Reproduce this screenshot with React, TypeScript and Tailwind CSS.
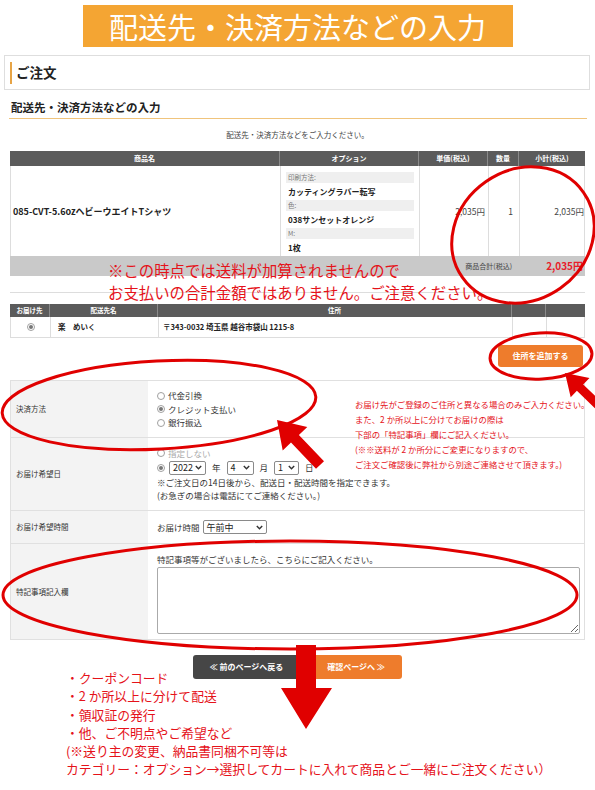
import React from "react";

const RED = "#e5121a";

function arrowPoints(sx: number, sy: number, tx: number, ty: number, sw: number, hw: number, hl: number) {
  const dx = tx - sx, dy = ty - sy;
  const L = Math.hypot(dx, dy);
  const ux = dx / L, uy = dy / L;
  const px = -uy, py = ux;
  const bx = tx - ux * hl, by = ty - uy * hl;
  const p = [
    [sx + (px * sw) / 2, sy + (py * sw) / 2],
    [bx + (px * sw) / 2, by + (py * sw) / 2],
    [bx + (px * hw) / 2, by + (py * hw) / 2],
    [tx, ty],
    [bx - (px * hw) / 2, by - (py * hw) / 2],
    [bx - (px * sw) / 2, by - (py * sw) / 2],
    [sx - (px * sw) / 2, sy - (py * sw) / 2],
  ];
  return p.map((q) => q.map((v) => v.toFixed(1)).join(",")).join(" ");
}

function Radio({ checked }: { checked?: boolean }) {
  return (
    <span className="inline-flex w-[8px] h-[8px] rounded-full border border-[#a0a0a0] bg-white items-center justify-center shrink-0">
      {checked && <span className="w-[4px] h-[4px] rounded-full bg-[#777]" />}
    </span>
  );
}

function Chevron() {
  return (
    <svg width="7" height="5" viewBox="0 0 7 5" className="shrink-0">
      <path d="M0.8 0.9 L3.5 3.7 L6.2 0.9" fill="none" stroke="#333" strokeWidth="1.4" />
    </svg>
  );
}

function Select({ value, w }: { value: string; w: string }) {
  return (
    <span className={`inline-flex items-center justify-between h-[14px] ${w} border border-[#8a8a8a] rounded-[2px] pl-[3px] pr-[3px] text-[9px] text-[#222] bg-white`}>
      <span>{value}</span>
      <Chevron />
    </span>
  );
}

export default function App() {
  return (
    <div className="relative w-[595px] h-[790px] overflow-hidden bg-white text-[#333] font-['Noto_Sans_CJK_JP',sans-serif]">
      {/* banner */}
      <div className="pt-[5px] flex justify-center">
        <div className="w-[430px] h-[42px] bg-[#f4a533] flex items-center justify-center text-white text-[29px] leading-none">
          配送先・決済方法などの入力
        </div>
      </div>

      {/* ご注文 */}
      <div className="mt-[8px] ml-[4px] mr-[5px] h-[35px] border border-[#dedede] flex items-center pl-[5px]">
        <div className="w-[2px] h-[22px] bg-[#e7a446]" />
        <span className="ml-[4px] text-[13.5px] font-bold text-[#222] leading-none">ご注文</span>
      </div>

      {/* heading */}
      <div className="mt-[8px] ml-[9px] mr-[8px] h-[21px] border-b-[1.5px] border-[#f0c47c] flex items-center pl-[2px] text-[11.5px] font-bold text-[#222] leading-none">
        配送先・決済方法などの入力
      </div>

      <div className="mt-[9px] h-[14px] flex items-center justify-center text-[7.5px] text-[#444] leading-none">
        配送先・決済方法などをご入力ください。
      </div>

      {/* product table */}
      <div className="mt-[9px] mx-[10px]">
        <div className="grid grid-cols-[269px_139px_69px_31px_67px] h-[15px] bg-[#5b5b5b] text-white text-[7px] font-bold leading-none">
          <div className="flex items-center justify-center">商品名</div>
          <div className="flex items-center justify-center border-l border-[#8a8a8a]">オプション</div>
          <div className="flex items-center justify-center border-l border-[#8a8a8a]">単価(税込)</div>
          <div className="flex items-center justify-center border-l border-[#8a8a8a]">数量</div>
          <div className="flex items-center justify-center border-l border-[#8a8a8a]">小計(税込)</div>
        </div>
        <div className="grid grid-cols-[269px_139px_69px_31px_67px] h-[90px] border-l border-r border-[#dddddd] text-[8.5px] text-[#444] leading-none">
          <div className="flex items-center pl-[2px] text-[9px] font-bold text-[#222]">085-CVT-5.6ozヘビーウエイトTシャツ</div>
          <div className="border-l border-[#dddddd] pt-[6px] px-[5px] flex flex-col">
            <div className="h-[11px] bg-[#efefef] flex items-center pl-[2px] text-[6.5px] text-[#777]">印刷方法:</div>
            <div className="h-[17px] flex items-center pl-[2px] text-[8px] font-bold text-[#222]">カッティングラバー転写</div>
            <div className="h-[11px] bg-[#efefef] flex items-center pl-[2px] text-[6.5px] text-[#777]">色:</div>
            <div className="h-[17px] flex items-center pl-[2px] text-[8px] font-bold text-[#222]">038サンセットオレンジ</div>
            <div className="h-[11px] bg-[#efefef] flex items-center pl-[2px] text-[6.5px] text-[#777]">M:</div>
            <div className="h-[17px] flex items-center pl-[2px] text-[8px] font-bold text-[#222]">1枚</div>
          </div>
          <div className="border-l border-[#dddddd] flex items-center justify-end pr-[3px]">2,035円</div>
          <div className="border-l border-[#dddddd] flex items-center justify-end pr-[6px]">1</div>
          <div className="border-l border-[#dddddd] flex items-center justify-end pr-[2px]">2,035円</div>
        </div>
        <div className="h-[20px] bg-[#c9c9c9] flex items-center justify-end leading-none">
          <span className="text-[7px] text-[#444] pr-[6px]">商品合計(税込)</span>
          <span className="w-[67px] text-right pr-[2px] text-[10px] font-bold text-[#e8202a]">2,035円</span>
        </div>
      </div>

      <div className="mt-[16px] mx-[10px] border-t border-[#dddddd]" />

      {/* delivery table */}
      <div className="mt-[11px] mx-[10px]">
        <div className="grid grid-cols-[39px_108px_354px_34px_40px] h-[13px] bg-[#5b5b5b] text-white text-[6.5px] font-bold leading-none">
          <div className="flex items-center justify-center">お届け先</div>
          <div className="flex items-center justify-center border-l border-[#8a8a8a]">配送先名</div>
          <div className="flex items-center justify-center border-l border-[#8a8a8a]">住所</div>
          <div className="border-l border-[#8a8a8a]" />
          <div className="border-l border-[#8a8a8a]" />
        </div>
        <div className="grid grid-cols-[39px_108px_354px_34px_40px] h-[21px] border-l border-r border-b border-[#dddddd] text-[7.5px] font-bold text-[#222] leading-none">
          <div className="flex items-center justify-center"><Radio checked /></div>
          <div className="flex items-center pl-[7px] border-l border-[#dddddd]">楽　めいく</div>
          <div className="flex items-center pl-[4px] border-l border-[#dddddd]">〒343-0032 埼玉県 越谷市袋山 1215-8</div>
          <div className="border-l border-[#dddddd]" />
          <div className="border-l border-[#dddddd]" />
        </div>
      </div>

      <div className="mt-[7px] flex justify-end pr-[12px]">
        <div className="w-[85px] h-[22px] rounded-[3px] bg-[#ee7c2c] flex items-center justify-center text-white text-[8px] font-bold leading-none">
          住所を追加する
        </div>
      </div>

      {/* form table */}
      <div className="mt-[13px] mx-[10px] border border-[#e0e0e0] text-[8.5px] leading-none">
        <div className="grid grid-cols-[137px_1fr] h-[57px] border-b border-[#e0e0e0]">
          <div className="bg-[#f3f3f3] flex items-center pl-[5px] text-[7.5px] text-[#333]">決済方法</div>
          <div className="flex flex-col justify-center pl-[9px] gap-[5px] text-[#333]">
            <div className="flex items-center gap-[3px]"><Radio /><span>代金引換</span></div>
            <div className="flex items-center gap-[3px]"><Radio checked /><span>クレジット支払い</span></div>
            <div className="flex items-center gap-[3px]"><Radio /><span>銀行振込</span></div>
          </div>
        </div>
        <div className="grid grid-cols-[137px_1fr] h-[73px] border-b border-[#e0e0e0]">
          <div className="bg-[#f3f3f3] flex items-center pl-[5px] text-[7.5px] text-[#333]">お届け希望日</div>
          <div className="flex flex-col justify-center pl-[9px] text-[#333]">
            <div className="h-[13px] flex items-center gap-[3px] text-[#aaa]"><Radio /><span>指定しない</span></div>
            <div className="h-[16px] flex items-center gap-[4px]">
              <Radio checked />
              <Select value="2022" w="w-[37px]" />
              <span className="px-[2px]">年</span>
              <Select value="4" w="w-[27px]" />
              <span className="px-[2px]">月</span>
              <Select value="1" w="w-[25px]" />
              <span className="px-[2px]">日</span>
            </div>
            <div className="h-[13px] flex items-center">※ご注文日の14日後から、配送日・配送時間を指定できます。</div>
            <div className="h-[13px] flex items-center">(お急ぎの場合は電話にてご連絡ください。)</div>
          </div>
        </div>
        <div className="grid grid-cols-[137px_1fr] h-[33px] border-b border-[#e0e0e0]">
          <div className="bg-[#f3f3f3] flex items-center pl-[5px] text-[7.5px] text-[#333]">お届け希望時間</div>
          <div className="flex items-center pl-[9px] gap-[3px] text-[#333]">
            <span>お届け時間</span>
            <Select value="午前中" w="w-[64px]" />
          </div>
        </div>
        <div className="grid grid-cols-[137px_1fr] h-[95px]">
          <div className="bg-[#f3f3f3] flex items-center pl-[5px] text-[7.5px] text-[#333]">特記事項記入欄</div>
          <div className="flex flex-col pl-[9px] pr-[5px] pt-[9px] text-[#333]">
            <div className="h-[13px] flex items-center">特記事項等がございましたら、こちらにご記入ください。</div>
            <textarea readOnly className="mt-[1px] w-[423px] h-[67px] border border-[#aaaaaa] rounded-[2px] bg-white" />
          </div>
        </div>
      </div>

      {/* nav buttons */}
      <div className="mt-[15px] flex justify-center gap-[10px]">
        <div className="w-[107px] h-[24px] rounded-[3px] bg-[#464646] flex items-center justify-center text-white text-[8px] font-bold leading-none">
          ≪ 前のページへ戻る
        </div>
        <div className="w-[92px] h-[24px] rounded-[3px] bg-[#ee7c2c] flex items-center justify-center text-white text-[8px] font-bold leading-none">
          確認ページへ ≫
        </div>
      </div>

      {/* annotation overlay drawing */}
      <svg className="absolute left-0 top-0 pointer-events-none" width="595" height="790" viewBox="0 0 595 790">
        <g fill="none" stroke="#e00000" strokeWidth="3">
          <ellipse cx="523" cy="235" rx="74" ry="65" transform="rotate(-35 523 235)" />
          <ellipse cx="541" cy="356" rx="51" ry="23" transform="rotate(-3 541 356)" />
          <ellipse cx="159" cy="405" rx="157" ry="44" transform="rotate(-3 159 405)" />
          <ellipse cx="290" cy="595" rx="287" ry="54" />
        </g>
        <g fill="#e00000">
          <polygon points={arrowPoints(598, 405, 565, 373, 9, 27, 21)} />
          <polygon points={arrowPoints(320, 465, 277, 420, 11, 34, 26)} />
          <polygon points="296,645 316,645 316,688 332,688 306,729 281,688 296,688" />
        </g>
      </svg>

      {/* annotation texts */}
      <div className="absolute left-[108px] top-[259px] text-[15.4px] leading-[22px] whitespace-nowrap" style={{ color: RED }}>
        <div>※この時点では送料が加算されませんので</div>
        <div>お支払いの合計金額ではありません。ご注意ください。</div>
      </div>

      <div className="absolute left-[355px] top-[397px] text-[8.4px] leading-[15px] whitespace-nowrap" style={{ color: RED }}>
        <div>お届け先がご登録のご住所と異なる場合のみご入力ください。</div>
        <div>また、2 か所以上に分けてお届けの際は</div>
        <div>下部の「特記事項」欄にご記入ください。</div>
        <div>(※※送料が 2 か所分にご変更になりますので、</div>
        <div>ご注文ご確認後に弊社から別途ご連絡させて頂きます。)</div>
      </div>

      <div className="absolute left-[66px] top-[669px] text-[12.8px] leading-[18.3px] whitespace-nowrap" style={{ color: RED }}>
        <div>・クーポンコード</div>
        <div>・2 か所以上に分けて配送</div>
        <div>・領収証の発行</div>
        <div>・他、ご不明点やご希望など</div>
        <div>(※送り主の変更、納品書同梱不可等は</div>
        <div>カテゴリー：オプション→選択してカートに入れて商品とご一緒にご注文ください）</div>
      </div>
    </div>
  );
}
